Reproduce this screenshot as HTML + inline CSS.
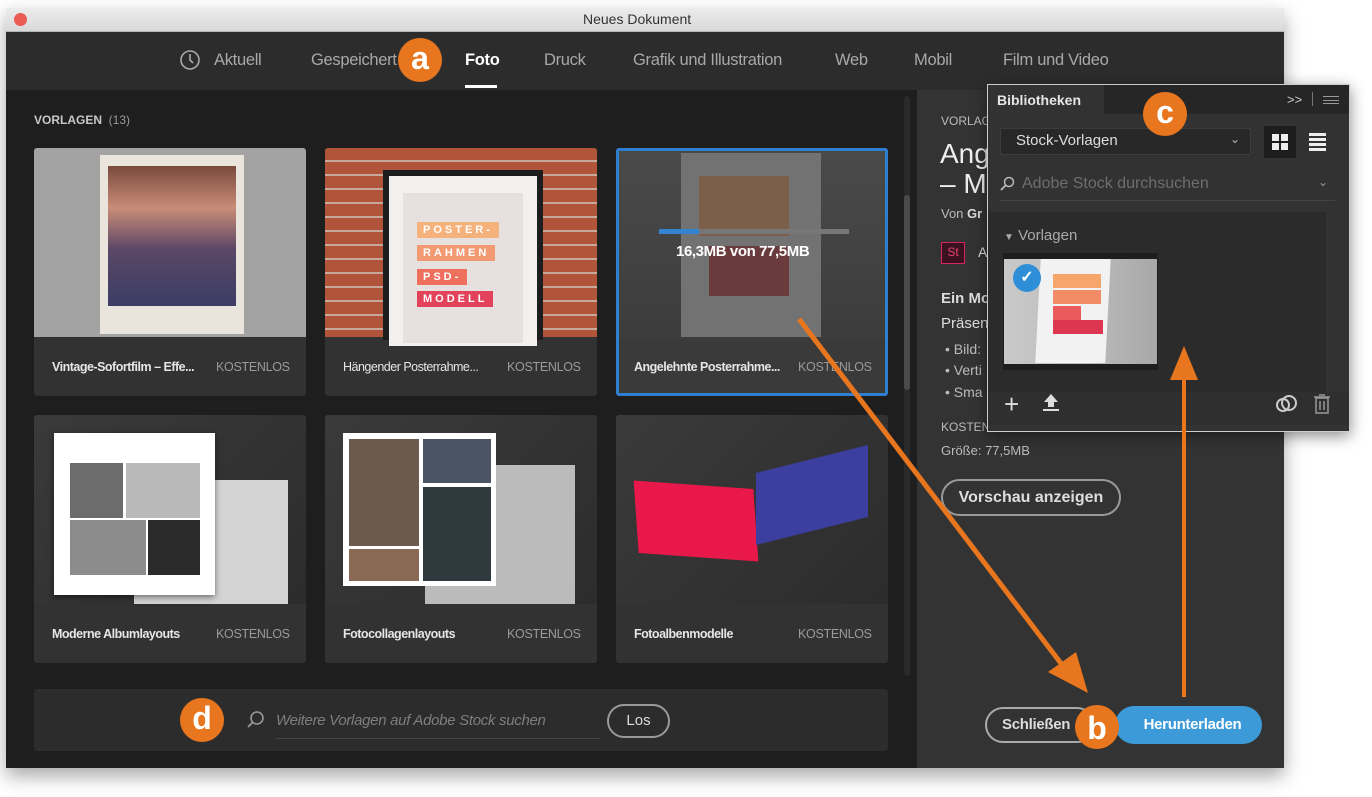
<!DOCTYPE html>
<html><head><meta charset="utf-8"><style>
*{margin:0;padding:0;box-sizing:border-box}
body{width:1372px;height:797px;background:#fff;position:relative;overflow:hidden;font-family:"Liberation Sans",sans-serif}
.a{position:absolute}
.t{position:absolute;white-space:nowrap}
.card{position:absolute;width:272px;height:248px;background:#323232;border-radius:3px;overflow:hidden}
.card .img{position:absolute;left:0;top:0;width:272px;height:189px}
.card .n{position:absolute;left:18px;top:212px;color:#e6e6e6;font-size:12.5px;font-weight:bold;letter-spacing:-.5px}
.card .k{position:absolute;left:182px;top:212px;color:#9a9a9a;font-size:12.5px;letter-spacing:-.3px}
.tab{position:absolute;top:51px;color:#a8a8a8;font-size:16.5px;letter-spacing:-.3px}
.dot{position:absolute;width:44px;height:44px;border-radius:50%;background:#e8761e;color:#fff;font-weight:bold;font-size:32px;text-align:center;line-height:40px}
.pt{position:absolute;color:#fff;font-size:11px;font-weight:bold;letter-spacing:3px;padding:2px 6px}
</style></head><body>
<div class="a" style="left:6px;top:8px;width:1278px;height:760px;box-shadow:0 8px 18px rgba(0,0,0,.35)"></div>
<div class="a" style="left:6px;top:8px;width:1278px;height:24px;background:linear-gradient(#ececec,#d9d9d9);border-bottom:1px solid #b5b5b5"></div>
<div class="a" style="left:14px;top:13px;width:13px;height:13px;border-radius:50%;background:#ec5a55"></div>
<div class="t" style="left:583px;top:11px;font-size:14px;color:#333">Neues Dokument</div>
<div class="a" style="left:6px;top:32px;width:1278px;height:58px;background:#2c2c2c"></div>
<svg class="a" style="left:179px;top:49px" width="22" height="22" viewBox="0 0 22 22"><circle cx="11" cy="11" r="9" fill="none" stroke="#aaa" stroke-width="1.6"/><path d="M11 5v6l3 3" fill="none" stroke="#aaa" stroke-width="1.6"/></svg>
<div class="tab" style="left:214px">Aktuell</div>
<div class="tab" style="left:311px">Gespeichert</div>
<div class="tab" style="left:465px;color:#fff;font-weight:bold">Foto</div>
<div class="a" style="left:465px;top:85px;width:32px;height:3px;background:#fff"></div>
<div class="tab" style="left:544px">Druck</div>
<div class="tab" style="left:633px">Grafik und Illustration</div>
<div class="tab" style="left:835px">Web</div>
<div class="tab" style="left:914px">Mobil</div>
<div class="tab" style="left:1003px">Film und Video</div>
<div class="a" style="left:6px;top:90px;width:911px;height:678px;background:#1e1e1e"></div>
<div class="a" style="left:904px;top:96px;width:6px;height:580px;background:#2a2a2a;border-radius:3px"></div>
<div class="a" style="left:904px;top:195px;width:6px;height:195px;background:#4a4a4a;border-radius:3px"></div>
<div class="t" style="left:34px;top:113px;font-size:12px;color:#c8c8c8;font-weight:bold">VORLAGEN <span style="font-weight:normal;color:#999">&nbsp;(13)</span></div>

<div class="card" style="left:34px;top:148px"><div class="img" style="background:#a3a3a3">
<div class="a" style="left:66px;top:7px;width:144px;height:179px;background:#e9e5dc"></div>
<div class="a" style="left:74px;top:18px;width:128px;height:140px;background:linear-gradient(180deg,#7a4a3c 0%,#c98c78 30%,#5a4766 60%,#3c3d66 100%)"></div>
</div><div class="n">Vintage-Sofortfilm – Effe...</div><div class="k">KOSTENLOS</div></div>
<div class="card" style="left:325px;top:148px"><div class="img" style="background:repeating-linear-gradient(180deg,#b0543a 0 12px,#c8a89a 12px 14px),#b0553b">
<div class="a" style="left:58px;top:22px;width:160px;height:170px;background:#1d1d1d"></div>
<div class="a" style="left:64px;top:28px;width:148px;height:170px;background:#f2f0ee"></div>
<div class="a" style="left:78px;top:45px;width:120px;height:150px;background:#e6e1de"></div>
<div class="pt" style="left:92px;top:74px;background:#f6b27c">POSTER-</div>
<div class="pt" style="left:92px;top:97px;background:#f39a73">RAHMEN</div>
<div class="pt" style="left:92px;top:121px;background:#ee6f5e">PSD-</div>
<div class="pt" style="left:92px;top:143px;background:#e2435a">MODELL</div>
</div><div class="n" style="font-weight:normal">Hängender Posterrahme...</div><div class="k">KOSTENLOS</div></div>
<div class="card" style="left:616px;top:148px;border:3px solid #2f7fd0;background:#3a3a3a"><div class="img" style="width:266px;background:linear-gradient(#4a4a4a,#3c3c3c)">
<div class="a" style="left:62px;top:2px;width:140px;height:184px;background:#727272"></div>
<div class="a" style="left:80px;top:25px;width:90px;height:60px;background:#7c5f4b"></div>
<div class="a" style="left:90px;top:95px;width:80px;height:50px;background:#6a3b3d"></div>
<div class="a" style="left:40px;top:78px;width:190px;height:5px;background:#777"></div>
<div class="a" style="left:40px;top:78px;width:40px;height:5px;background:#3383d0"></div>
<div class="t" style="left:57px;top:92px;color:#fff;font-size:15px;font-weight:bold;letter-spacing:-.4px">16,3MB von 77,5MB</div>
</div><div class="n" style="left:15px;top:209px">Angelehnte Posterrahme...</div><div class="k" style="left:179px;top:209px">KOSTENLOS</div></div>
<div class="card" style="left:34px;top:415px"><div class="img" style="background:linear-gradient(135deg,#3a3a3a,#2c2c2c)">
<div class="a" style="left:100px;top:65px;width:154px;height:124px;background:#d4d4d4"></div>
<div class="a" style="left:20px;top:18px;width:161px;height:162px;background:#fff;box-shadow:0 2px 6px rgba(0,0,0,.5)"></div>
<div class="a" style="left:36px;top:48px;width:53px;height:55px;background:#6c6c6c"></div>
<div class="a" style="left:92px;top:48px;width:74px;height:55px;background:#b9b9b9"></div>
<div class="a" style="left:36px;top:105px;width:76px;height:55px;background:#8c8c8c"></div>
<div class="a" style="left:114px;top:105px;width:52px;height:55px;background:#2b2b2b"></div>
</div><div class="n">Moderne Albumlayouts</div><div class="k">KOSTENLOS</div></div>
<div class="card" style="left:325px;top:415px"><div class="img" style="background:linear-gradient(135deg,#3a3a3a,#2c2c2c)">
<div class="a" style="left:100px;top:50px;width:150px;height:139px;background:#bbb"></div>
<div class="a" style="left:18px;top:18px;width:153px;height:153px;background:#fff"></div>
<div class="a" style="left:24px;top:24px;width:70px;height:107px;background:#6d5a4f"></div>
<div class="a" style="left:98px;top:24px;width:68px;height:44px;background:#4b5463"></div>
<div class="a" style="left:98px;top:72px;width:68px;height:94px;background:#2e3a3e"></div>
<div class="a" style="left:24px;top:134px;width:70px;height:32px;background:#8a6a55"></div>
</div><div class="n">Fotocollagenlayouts</div><div class="k">KOSTENLOS</div></div>
<div class="card" style="left:616px;top:415px"><div class="img" style="background:linear-gradient(135deg,#3a3a3a,#2c2c2c)">
<div class="a" style="left:20px;top:70px;width:120px;height:72px;background:#e8194a;transform:skewY(8deg) rotate(-4deg)"></div>
<div class="a" style="left:140px;top:44px;width:112px;height:72px;background:#3d3fa0;transform:skewY(-14deg)"></div>
</div><div class="n">Fotoalbenmodelle</div><div class="k">KOSTENLOS</div></div>

<div class="a" style="left:34px;top:689px;width:854px;height:62px;background:#2c2c2c;border-radius:3px"></div>
<svg class="a" style="left:245px;top:710px" width="20" height="20" viewBox="0 0 20 20"><circle cx="12" cy="8" r="6" fill="none" stroke="#999" stroke-width="1.6"/><path d="M8 12l-5 5" stroke="#999" stroke-width="1.8"/></svg>
<div class="t" style="left:276px;top:712px;font-size:15px;color:#7e7e7e;font-style:italic;letter-spacing:-.3px">Weitere Vorlagen auf Adobe Stock suchen</div>
<div class="a" style="left:276px;top:738px;width:324px;height:1px;background:#444"></div>
<div class="a" style="left:607px;top:704px;width:63px;height:34px;border:2px solid #9a9a9a;border-radius:17px;color:#ddd;font-size:15px;text-align:center;line-height:30px">Los</div>

<div class="a" style="left:917px;top:90px;width:367px;height:678px;background:#333"></div>
<div class="t" style="left:941px;top:114px;font-size:12px;color:#bbb">VORLAGEN</div>
<div class="t" style="left:940px;top:138px;font-size:28px;color:#eee">Ang</div>
<div class="t" style="left:940px;top:168px;font-size:28px;color:#eee">– M</div>
<div class="t" style="left:941px;top:206px;font-size:13px;color:#bbb">Von <b style="color:#ddd">Gr</b></div>
<div class="a" style="left:941px;top:242px;width:24px;height:22px;border:1.5px solid #d6245e;background:#3a1220;color:#e5426f;font-size:12px;text-align:center;line-height:19px">St</div>
<div class="t" style="left:978px;top:244px;font-size:14px;color:#ddd">A</div>
<div class="t" style="left:941px;top:290px;font-size:15px;color:#ddd;font-weight:bold">Ein Mo</div>
<div class="t" style="left:941px;top:315px;font-size:15px;color:#ddd">Präsen</div>
<div class="t" style="left:945px;top:341px;font-size:14px;color:#bbb">• Bild:</div>
<div class="t" style="left:945px;top:362px;font-size:14px;color:#bbb">• Verti</div>
<div class="t" style="left:945px;top:384px;font-size:14px;color:#bbb">• Sma</div>
<div class="t" style="left:941px;top:420px;font-size:12px;color:#bbb">KOSTENLOS</div>
<div class="t" style="left:941px;top:443px;font-size:13px;color:#bbb">Größe: 77,5MB</div>
<div class="a" style="left:941px;top:479px;width:180px;height:37px;border:2px solid #999;border-radius:19px;color:#ddd;font-size:16px;font-weight:bold;text-align:center;line-height:33px">Vorschau anzeigen</div>
<div class="a" style="left:985px;top:707px;width:110px;height:36px;border:2px solid #aaa;border-radius:18px;color:#ddd;font-size:15px;font-weight:bold;line-height:32px;padding-left:15px;letter-spacing:-.3px">Schließen</div>
<div class="a" style="left:1115px;top:706px;width:147px;height:38px;background:#3c9ad9;border-radius:19px;color:#fff;font-size:15px;font-weight:bold;text-align:center;line-height:38px;padding-left:8px;letter-spacing:-.3px">Herunterladen</div>

<div class="a" style="left:987px;top:84px;width:363px;height:348px;background:#323232;border:1px solid #ccc;box-shadow:0 4px 14px rgba(0,0,0,.45)"></div>
<div class="a" style="left:988px;top:85px;width:361px;height:29px;background:#262626"></div>
<div class="a" style="left:988px;top:85px;width:116px;height:29px;background:#323232"></div>
<div class="t" style="left:997px;top:92px;font-size:14px;font-weight:bold;color:#e6e6e6">Bibliotheken</div>
<div class="t" style="left:1287px;top:92px;font-size:13px;color:#ccc">&gt;&gt;</div>
<div class="a" style="left:1312px;top:92px;width:1px;height:14px;background:#777"></div>
<div class="a" style="left:1323px;top:96px;width:16px;height:8px;border-top:1px solid #999;border-bottom:1px solid #999"></div>
<div class="a" style="left:1323px;top:100px;width:16px;height:1px;background:#999"></div>
<div class="a" style="left:1000px;top:128px;width:251px;height:27px;background:#282828;border:1px solid #3c3c3c;border-radius:2px"></div>
<div class="t" style="left:1016px;top:132px;font-size:15px;color:#ddd">Stock-Vorlagen</div>
<div class="t" style="left:1230px;top:132px;font-size:12px;color:#bbb">⌄</div>
<div class="a" style="left:1264px;top:126px;width:32px;height:32px;background:#1d1d1d"></div>
<div class="a" style="left:1272px;top:134px;width:7px;height:7px;background:#eee;box-shadow:9px 0 #eee,0 9px #eee,9px 9px #eee"></div>
<div class="a" style="left:1309px;top:133px;width:17px;height:3px;background:#eee;box-shadow:0 5px #eee,0 10px #eee,0 15px #eee"></div>
<svg class="a" style="left:999px;top:176px" width="16" height="16" viewBox="0 0 16 16"><circle cx="10" cy="6" r="4.5" fill="none" stroke="#bbb" stroke-width="1.5"/><path d="M7 9l-5 5" stroke="#bbb" stroke-width="1.8"/></svg>
<div class="t" style="left:1022px;top:175px;font-size:16px;color:#6e6e6e">Adobe Stock durchsuchen</div>
<div class="t" style="left:1318px;top:175px;font-size:12px;color:#999">⌄</div>
<div class="a" style="left:999px;top:200px;width:336px;height:1px;background:#444"></div>
<div class="a" style="left:988px;top:212px;width:338px;height:180px;background:#2b2b2b"></div>
<div class="t" style="left:1004px;top:227px;font-size:15px;color:#aaa"><span style="font-size:10px">▼</span> Vorlagen</div>
<div class="a" style="left:1003px;top:253px;width:155px;height:117px;background:#1e1e1e"></div>
<div class="a" style="left:1004px;top:259px;width:153px;height:105px;background:linear-gradient(90deg,#c9c9c9,#bdbdbd 50%,#a8a8a8)"></div>
<div class="a" style="left:1038px;top:259px;width:70px;height:104px;background:#f2f2f2;transform:skewX(-3deg)"></div>
<div class="a" style="left:1053px;top:274px;width:48px;height:14px;background:#f6a56b"></div>
<div class="a" style="left:1053px;top:290px;width:48px;height:14px;background:#f28c67"></div>
<div class="a" style="left:1053px;top:306px;width:28px;height:14px;background:#ea5b5e"></div>
<div class="a" style="left:1053px;top:320px;width:50px;height:14px;background:#dd3650"></div>
<div class="a" style="left:1013px;top:264px;width:28px;height:28px;border-radius:50%;background:#2e8fd8;color:#fff;font-size:16px;text-align:center;line-height:28px;font-weight:bold">✓</div>
<div class="a" style="left:988px;top:392px;width:361px;height:33px;background:#2f2f2f"></div>
<div class="t" style="left:1004px;top:389px;font-size:26px;color:#ddd">+</div>
<svg class="a" style="left:1042px;top:393px" width="18" height="20" viewBox="0 0 18 20"><path d="M9 1l7 8h-4v5H6V9H2z" fill="#ddd"/><rect x="1" y="16" width="16" height="2" fill="#ddd"/></svg>
<svg class="a" style="left:1274px;top:394px" width="26" height="20" viewBox="0 0 26 20"><circle cx="9" cy="11" r="6" fill="none" stroke="#ccc" stroke-width="2"/><circle cx="15" cy="9" r="7" fill="none" stroke="#ccc" stroke-width="2"/></svg>
<svg class="a" style="left:1313px;top:394px" width="18" height="20" viewBox="0 0 18 20"><rect x="3" y="4" width="12" height="15" fill="none" stroke="#999" stroke-width="1.5"/><path d="M1 3h16M6 1h6M7 7v9M11 7v9" stroke="#999" stroke-width="1.5"/></svg>

<svg class="a" style="left:0;top:0" width="1372" height="797" viewBox="0 0 1372 797">
<path d="M799 319L1066 670" stroke="#e8761e" stroke-width="5"/>
<path d="M1088 693L1048 672L1076 652z" fill="#e8761e"/>
<path d="M1184 697V380" stroke="#e8761e" stroke-width="4"/>
<path d="M1184 346L1170 380H1198z" fill="#e8761e"/>
</svg>
<div class="dot" style="left:398px;top:38px">a</div>
<div class="dot" style="left:1075px;top:705px;line-height:46px">b</div>
<div class="dot" style="left:1143px;top:92px">c</div>
<div class="dot" style="left:180px;top:698px">d</div>
</body></html>
